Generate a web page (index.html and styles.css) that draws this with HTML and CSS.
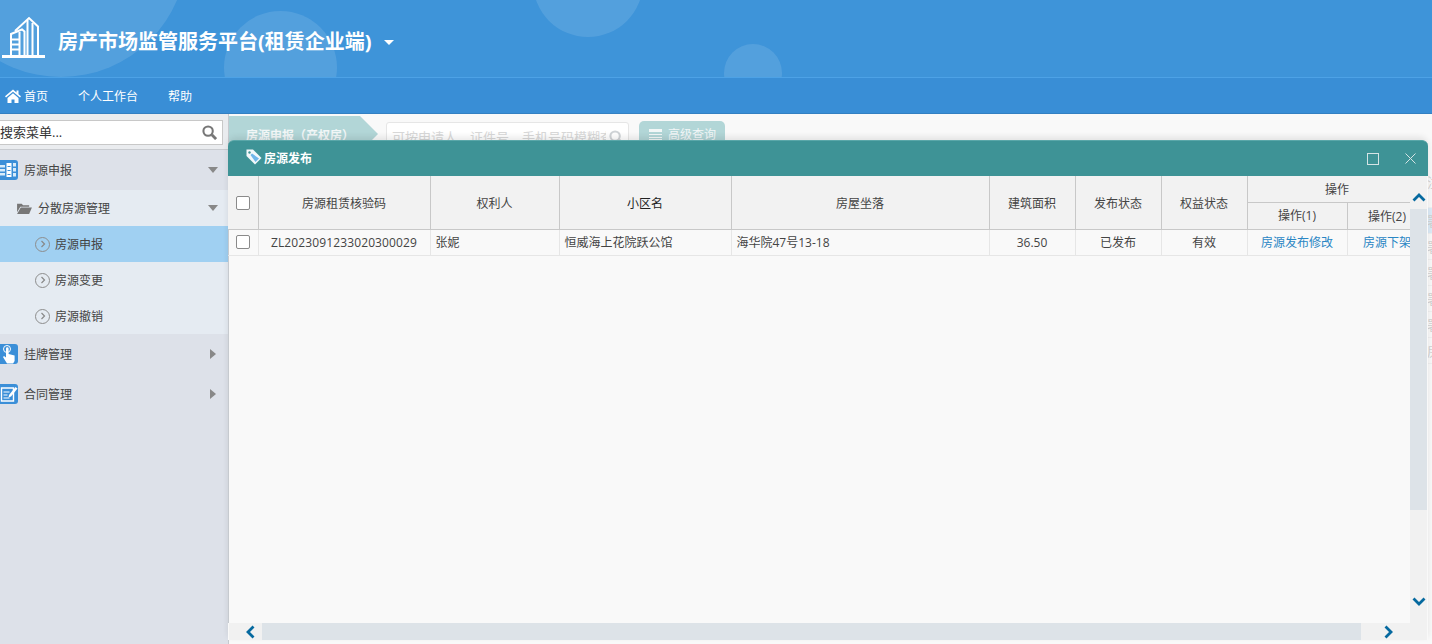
FILE: index.html
```html
<!DOCTYPE html>
<html lang="zh-CN">
<head>
<meta charset="utf-8">
<title>房产市场监管服务平台</title>
<link rel="stylesheet" href="styles.css">
</head>
<body>
<header class="banner">
  <span class="bubble bubble-a"></span>
  <span class="bubble bubble-b"></span>
  <span class="bubble bubble-c"></span>
  <span class="bubble bubble-d"></span>
  <svg class="logo" viewBox="0 0 46 44" width="46" height="44" fill="none" stroke="#fff" stroke-width="2">
    <path d="M1 41.500h43" stroke-width="3"/>
    <path d="M14 16L28 3l9 8.500V41"/>
    <path d="M26.500 5v36M31.500 8v33" stroke-width="2"/>
    <path d="M10 41V19l11-4.500 2.500 2V41" stroke-width="2"/>
    <path d="M10 24.500h9M10 29.500h9M10 34.500h9M18.500 17v23" stroke-width="2"/>
  </svg>
  <h1 class="brand">房产市场监管服务平台(租赁企业端)</h1>
  <span class="caret-down"></span>
</header>
<nav class="topnav">
  <a class="topnav-item">
    <svg class="home" viewBox="0 0 16 14" width="16" height="14"><path fill="#fff" d="M8 .500L0 7.300l1 1.200L8 2.700l7 5.800 1-1.200-2.500-2.100V1.500h-2v2.100zM2.500 9L8 4.300 13.500 9v5h-4v-3.500h-3V14h-4z"/></svg>首页</a>
  <a class="topnav-item">个人工作台</a>
  <a class="topnav-item">帮助</a>
</nav>
<div class="layout">
  <aside class="sidebar">
    <div class="search-wrap">
      <div class="search">
        <span>搜索菜单...</span>
        <svg viewBox="0 0 16 16" width="15" height="15" fill="none" stroke="#777" stroke-width="2.200"><circle cx="6.500" cy="6.500" r="5"/><path d="M10.500 10.500L15 15" stroke-width="3"/></svg>
      </div>
    </div>
    <div class="menu-head">
      <span class="menu-icon"><svg viewBox="0 0 18 20" width="18" height="20"><path fill="#d8ecfa" d="M0 5h5v2.500H0zM0 9h5v2.500H0zM0 13h5v2.500H0z"/><path fill="#fff" d="M6.500 3h5v14h-5z"/><path fill="#3b8fd8" d="M7.500 6h3v1h-3zM7.500 10h3v1h-3zM7.500 14h3v1h-3z"/><path fill="#d8ecfa" d="M13 3h3v3.500h-3zM13 8h3v3.500h-3zM13 13h3v3.500h-3z"/></svg></span>
      <span class="menu-label">房源申报</span><span class="tri tri-down"></span>
    </div>
    <div class="sub-head">
      <svg class="folder" viewBox="0 0 16 14" width="15" height="13"><path fill="#777" d="M0 2h5l1.500 1.500H13V5H3.500L0 11zM4 6h12l-3 7H0z"/></svg>
      <span class="menu-label">分散房源管理</span><span class="tri tri-down"></span>
    </div>
    <div class="leaf leaf-on"><span class="ring"><svg viewBox="0 0 6 8" width="6" height="8" fill="none" stroke="#888" stroke-width="1.200"><path d="M1.500 1l3 3-3 3"/></svg></span><span class="leaf-label">房源申报</span></div>
    <div class="leaf"><span class="ring"><svg viewBox="0 0 6 8" width="6" height="8" fill="none" stroke="#888" stroke-width="1.200"><path d="M1.500 1l3 3-3 3"/></svg></span><span class="leaf-label">房源变更</span></div>
    <div class="leaf"><span class="ring"><svg viewBox="0 0 6 8" width="6" height="8" fill="none" stroke="#888" stroke-width="1.200"><path d="M1.500 1l3 3-3 3"/></svg></span><span class="leaf-label">房源撤销</span></div>
    <div class="menu-head">
      <span class="menu-icon"><svg viewBox="0 0 18 20" width="18" height="20"><circle cx="7" cy="5" r="3.500" fill="none" stroke="#fff" stroke-width="1"/><path fill="#fff" d="M6 4.500a1.300 1.300 0 0 1 2.600 0V10l6 1.500V17l-1.500 2.500H7L3 13l1-1 2 1.500z"/></svg></span>
      <span class="menu-label">挂牌管理</span><span class="tri tri-right"></span>
    </div>
    <div class="menu-head">
      <span class="menu-icon"><svg viewBox="0 0 18 20" width="18" height="20"><path fill="none" stroke="#fff" stroke-width="1.400" d="M1.500 4h12v13h-12z"/><path stroke="#fff" stroke-width="1.200" d="M3.500 8h6M3.500 11h4M3.500 14h6"/><path fill="#fff" d="M15.500 3l2 1.500-6.500 8-2.500 1 .5-2.500z"/></svg></span>
      <span class="menu-label">合同管理</span><span class="tri tri-right"></span>
    </div>
  </aside>
  <main class="content">
    <div class="toolbar">
      <div class="crumb">房源申报（产权房）</div>
      <div class="query">
        <span class="query-text">可按申请人、证件号、手机号码模糊查询</span>
        <svg viewBox="0 0 16 16" width="15" height="15" fill="none" stroke="#cfd3d6" stroke-width="2.200"><circle cx="6.500" cy="6.500" r="5"/><path d="M10.500 10.500L15 15" stroke-width="3"/></svg>
      </div>
      <button class="adv"><span class="adv-icon"></span>高级查询</button>
    </div>
    <div class="back-list">
      <div class="back-row back-head">注</div>
      <div class="back-row back-on">署</div>
      <div class="back-row">署</div>
      <div class="back-row">署</div>
      <div class="back-row">署</div>
      <div class="back-row">署</div>
      <div class="back-row">房</div>
    </div>
    <section class="dialog">
      <div class="dialog-bar">
        <svg class="tag" viewBox="0 0 16 16" width="16" height="16"><path fill="#f2f8fa" d="M.5.500h6.500l8.500 8.500-6.500 6.500L.5 7z"/><path fill="#6fb6ea" d="M6 4.500l7 5-3.500 3.500-5-7z"/><circle cx="3.500" cy="3.500" r="1.200" fill="#3e9396"/></svg>
        <span class="dialog-title">房源发布</span>
        <span class="dlg-max"></span>
        <svg class="dlg-close" viewBox="0 0 11 11" width="11" height="11" stroke="#d5e4e5" stroke-width="1"><path d="M.5.500l10 10M10.500.500l-10 10"/></svg>
      </div>
      <div class="dialog-main">
        <div class="grid-clip">
          <table class="grid">
            <colgroup>
              <col class="c-check"><col class="c-code"><col class="c-owner"><col class="c-code"><col class="c-addr"><col class="c-num"><col class="c-num"><col class="c-num"><col class="c-op"><col class="c-op2">
            </colgroup>
            <thead>
              <tr class="h1">
                <th rowspan="2"><span class="check"></span></th>
                <th rowspan="2">房源租赁核验码</th>
                <th rowspan="2">权利人</th>
                <th rowspan="2" class="dark">小区名</th>
                <th rowspan="2">房屋坐落</th>
                <th rowspan="2">建筑面积</th>
                <th rowspan="2">发布状态</th>
                <th rowspan="2">权益状态</th>
                <th colspan="2">操作</th>
              </tr>
              <tr class="h2"><th>操作(1)</th><th>操作(2)</th></tr>
            </thead>
            <tbody>
              <tr>
                <td class="mid"><span class="check"></span></td>
                <td class="mid code">ZL2023091233020300029</td>
                <td>张妮</td>
                <td>恒威海上花院跃公馆</td>
                <td>海华院47号13-18</td>
                <td class="mid">36.50</td>
                <td class="mid">已发布</td>
                <td class="mid">有效</td>
                <td class="mid"><a class="link">房源发布修改</a></td>
                <td class="mid"><a class="link">房源下架</a></td>
              </tr>
            </tbody>
          </table>
        </div>
        <div class="vbar">
          <span class="vbtn"><svg viewBox="0 0 14 9" width="14" height="9" fill="none" stroke="#05699f" stroke-width="2.800"><path d="M1.500 7.500L7 2l5.500 5.500"/></svg></span>
          <span class="vthumb"></span>
          <span class="vbtn vbtn-end"><svg viewBox="0 0 14 9" width="14" height="9" fill="none" stroke="#05699f" stroke-width="2.800"><path d="M1.500 1.500L7 7l5.500-5.500"/></svg></span>
        </div>
      </div>
      <div class="hbar">
        <span class="hbtn"><svg viewBox="0 0 9 14" width="9" height="14" fill="none" stroke="#05699f" stroke-width="2.800"><path d="M7.500 1.500L2 7l5.500 5.500"/></svg></span>
        <span class="hthumb"></span>
        <span class="hbtn hbtn-end"><svg viewBox="0 0 9 14" width="9" height="14" fill="none" stroke="#05699f" stroke-width="2.800"><path d="M1.500 1.500L7 7l-5.500 5.500"/></svg></span>
      </div>
    </section>
  </main>
</div>
</body>
</html>
```
FILE: styles.css
```css
* { box-sizing: border-box; }
html, body { margin: 0; height: 100%; }
body {
  width: 1432px;
  height: 644px;
  overflow: hidden;
  display: flex;
  flex-direction: column;
  font: 12px/1.2 "Open Sans", "Noto Sans CJK SC", sans-serif;
  color: #444;
  background: #f9f9f9;
}
.banner {
  position: relative;
  height: 78px;
  flex: none;
  display: flex;
  align-items: center;
  overflow: hidden;
  background: #3e94d9;
  border-bottom: 1px solid #4da2e6;
  padding-left: 1px;
}
.bubble { position: absolute; border-radius: 50%; background: rgba(255,255,255,.115); }
.bubble-a { left: -65px; top: -175px; width: 252px; height: 252px; }
.bubble-b { left: 224px; top: 11px; width: 113px; height: 113px; }
.bubble-c { left: 533px; top: -73px; width: 110px; height: 110px; }
.bubble-d { left: 724px; top: 44px; width: 58px; height: 58px; }
.logo { position: relative; margin-top: -3px; flex: none; }
.brand {
  position: relative;
  margin: 6px 0 0 11px;
  font-size: 20px;
  font-weight: 700;
  color: #fff;
  line-height: 28px;
  white-space: nowrap;
}
.caret-down {
  position: relative;
  margin-left: 12px;
  margin-top: 8px;
  border: 5px solid transparent;
  border-top-color: #fff;
  border-bottom-width: 0;
}
.topnav {
  height: 36px;
  flex: none;
  display: flex;
  align-items: center;
  gap: 30px;
  padding: 4px 0 0 5px;
  background: #398ed6;
  border-bottom: 1px solid #3380c2;
}
.topnav-item { display: flex; align-items: center; gap: 3px; color: #fff; font-size: 12px; }
.home { margin-top: -2px; }
.layout { flex: 1; min-height: 0; display: flex; }
.sidebar {
  width: 229px;
  flex: none;
  background: #dde1e9;
  border-right: 1px solid #c6cacf;
}
.search-wrap {
  height: 36px;
  padding: 6px 5px 5px 0;
  background: #eaecef;
  border-bottom: 1px solid #c8cbd0;
}
.search {
  height: 25px;
  display: flex;
  align-items: center;
  justify-content: space-between;
  padding: 0 5px 0 0;
  background: #fff;
  border: 1px solid #c8c8c8;
  border-left: 0;
  font-size: 13px;
  color: #333;
}
.menu-head {
  height: 40px;
  display: flex;
  align-items: center;
  color: #444;
}
.menu-icon {
  width: 18px;
  height: 20px;
  flex: none;
  background: #3b8fd8;
  border-radius: 0 3px 3px 0;
  display: flex;
}
.menu-label { flex: 1; margin-left: 6px; padding-top: 2px; }
.tri { flex: none; margin-right: 10px; border-style: solid; border-color: transparent; }
.tri-down { border-width: 6px 5px 0; border-top-color: #888; }
.tri-right { border-width: 5px 0 5px 6px; border-left-color: #888; margin-right: 12px; }
.sub-head {
  height: 36px;
  display: flex;
  align-items: center;
  padding-left: 17px;
  background: #e5ebf2;
}
.folder { flex: none; }
.sub-head .menu-label { margin-left: 6px; }
.leaf {
  height: 36px;
  display: flex;
  align-items: center;
  gap: 5px;
  padding-left: 35px;
  background: #e5ebf2;
}
.leaf-label { padding-top: 2px; }
.leaf-on { background: #a0d0f2; }
.ring {
  width: 15px;
  height: 15px;
  border: 1.500px solid #8d8d8d;
  border-radius: 50%;
  display: flex;
  align-items: center;
  justify-content: center;
}
.content { position: relative; flex: 1; min-width: 0; background: #f9f9f9; }
.toolbar { height: 50px; display: flex; align-items: flex-start; overflow: hidden; }
.crumb {
  width: 149px;
  height: 36px;
  margin-top: 2px;
  padding: 13px 0 0 17px;
  background: #b2d6d7;
  clip-path: polygon(0 0, 131px 0, 149px 18px, 131px 36px, 0 36px);
  color: #f2f7f7;
  font-weight: 700;
}
.query {
  width: 243px;
  height: 30px;
  margin: 8px 0 0 8px;
  padding: 3px 4px 0 5px;
  display: flex;
  align-items: flex-start;
  gap: 3px;
  background: #fff;
  border: 1px solid #e6e6e6;
  border-radius: 3px;
}
.query-text { width: 214px; overflow: hidden; white-space: nowrap; color: #d8d8d8; font-size: 13px; line-height: 22px; }
.query svg { margin-top: 4px; flex: none; }
.adv {
  width: 86px;
  height: 30px;
  margin: 7px 0 0 10px;
  padding: 7px 0 0 10px;
  display: flex;
  align-items: flex-start;
  gap: 6px;
  border: 0;
  border-radius: 5px;
  background: #b2d6d7;
  color: #f2f7f7;
  font: inherit;
  font-size: 12px;
}
.adv-icon {
  width: 13px;
  height: 12px;
  margin-top: 1px;
  border-top: 2px solid #f2f7f7;
  border-bottom: 2px solid #f2f7f7;
  background: repeating-linear-gradient(#f2f7f7 0 1px, #b2d6d7 1px 3px);
}
.back-list { margin-left: 1198px; white-space: nowrap; color: #d2d2d2; font-size: 13px; overflow: hidden; }
.back-row { height: 26px; line-height: 26px; border-bottom: 1px solid #f0f0f0; }
.back-head { height: 44px; line-height: 36px; }
.back-on { background: #dcebf7; }
.dialog {
  position: absolute;
  left: -1px;
  top: 26px;
  width: 1200px;
  bottom: 4px;
  display: flex;
  flex-direction: column;
  background: #f9f9f9;
  border-radius: 8px 8px 0 0;
  box-shadow: 0 -3px 6px rgba(0,0,0,.09);
}
.dialog-bar {
  height: 36px;
  flex: none;
  display: flex;
  align-items: center;
  padding: 0 12px 0 18px;
  background: #3e9396;
  border-top: 1px solid #5aa7a9;
  border-radius: 6px 6px 0 0;
}
.tag { flex: none; margin-top: -3px; }
.dialog-title { flex: 1; margin-left: 2px; padding-top: 2px; color: #fff; font-weight: 700; }
.dlg-max { width: 12px; height: 12px; border: 1px solid #d5e4e5; margin-right: 26px; }
.dlg-close { flex: none; }
.dialog-main { flex: 1; min-height: 0; display: flex; }
.grid-clip {
  flex: none;
  width: 1182px;
  overflow: hidden;
  background: linear-gradient(#c6cacf, #c6cacf) 0 0 / 1px 100% no-repeat;
}
.grid { table-layout: fixed; width: 1199px; border-collapse: collapse; }
.c-check { width: 30px; }
.c-code { width: 172px; }
.c-owner { width: 129px; }
.c-addr { width: 258px; }
.c-num { width: 86px; }
.c-op { width: 100px; }
.c-op2 { width: 80px; }
.grid th {
  height: 26.500px;
  padding: 3px 0 0;
  font-weight: 400;
  background: #f2f2f2;
  border: 1px solid #c8c8c8;
  border-top: 0;
  white-space: nowrap;
}
.grid th:first-child { border-left: 0; padding: 0; }
.grid th.dark { color: #222; }
.grid td {
  height: 26px;
  padding: 3px 5px 0;
  white-space: nowrap;
  border: 1px solid #e6e6e6;
  border-top: 0;
}
.grid td:first-child { border-left: 0; padding: 0; }
.grid .mid { text-align: center; }
.grid .code { letter-spacing: .12px; }
.check {
  display: inline-block;
  width: 14px;
  height: 14px;
  vertical-align: middle;
  background: #fff;
  border: 1px solid #8a8a8a;
  border-radius: 2px;
}
.link { color: #2a86c4; }
.vbar { width: 17px; flex: none; display: flex; flex-direction: column; background: #f1f1f1; }
.vbtn { height: 33px; flex: none; display: flex; align-items: center; justify-content: center; padding-top: 9px; }
.vthumb { height: 301px; flex: none; background: #dde3e8; }
.vbtn-end { margin-top: auto; height: 45px; padding-top: 1px; }
.hbar { height: 17px; flex: none; margin: 0 1px; display: flex; background: #f1f1f1; }
.hbtn { width: 33px; flex: none; display: flex; align-items: center; justify-content: center; padding-left: 9px; }
.hthumb { width: 1099px; flex: none; background: #dde3e8; }
.hbtn-end { width: 54px; padding-left: 0; }
```
